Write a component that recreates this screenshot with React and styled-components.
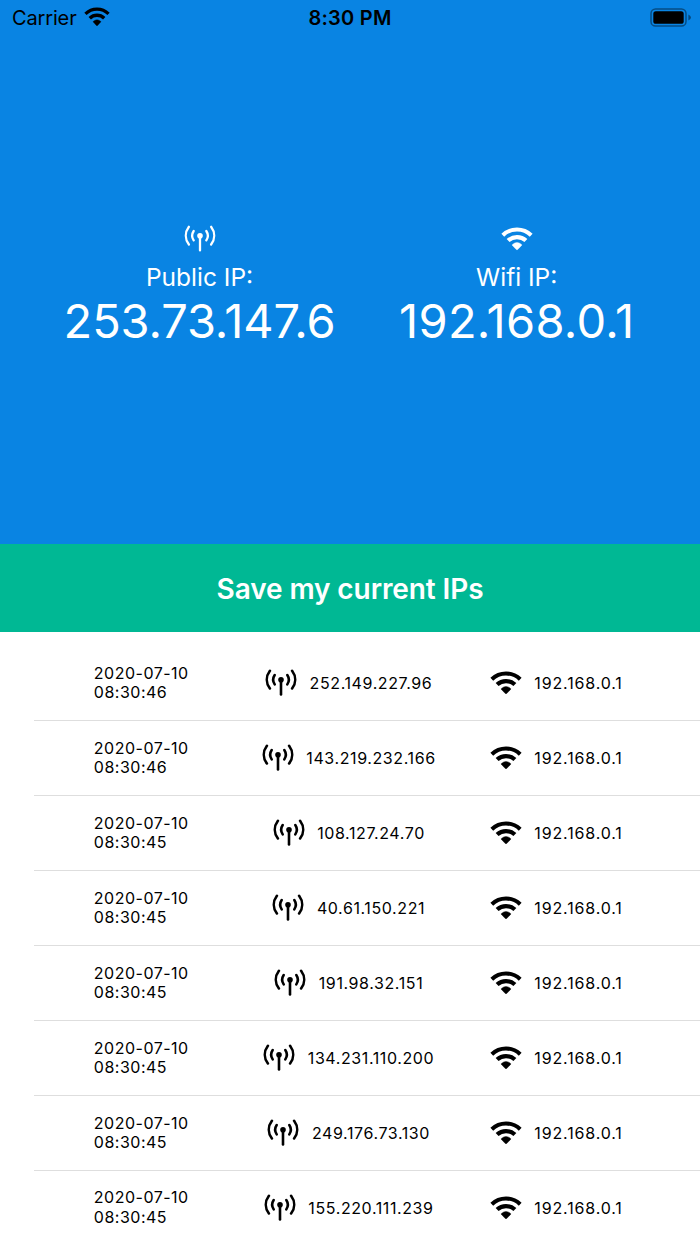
import React from 'react'
import styled, { createGlobalStyle } from 'styled-components'

const entries = [
  { date: '2020-07-10', time: '08:30:46', publicIp: '252.149.227.96' },
  { date: '2020-07-10', time: '08:30:46', publicIp: '143.219.232.166' },
  { date: '2020-07-10', time: '08:30:45', publicIp: '108.127.24.70' },
  { date: '2020-07-10', time: '08:30:45', publicIp: '40.61.150.221' },
  { date: '2020-07-10', time: '08:30:45', publicIp: '191.98.32.151' },
  { date: '2020-07-10', time: '08:30:45', publicIp: '134.231.110.200' },
  { date: '2020-07-10', time: '08:30:45', publicIp: '249.176.73.130' },
  { date: '2020-07-10', time: '08:30:45', publicIp: '155.220.111.239' }
]

const wifiIp = '192.168.0.1'

const WifiIcon = ({ width = 32, height = 23 }) => (
  <svg width={width} height={height} viewBox="0 0 32 23" fill="none">
    <g stroke="currentColor">
      <path d="M1.8 8.3A20.3 20.3 0 0 1 30.2 8.3" strokeWidth="4" />
      <path d="M7.1 13.6A12.9 12.9 0 0 1 24.9 13.6" strokeWidth="4.2" />
    </g>
    <path
      d="M11.4 18.4Q11 17.9 11.5 17.4Q16 13.6 20.5 17.4Q21 17.9 20.6 18.4L16.7 22.5Q16 23.1 15.3 22.5Z"
      fill="currentColor"
      stroke="currentColor"
      strokeWidth="0.4"
    />
  </svg>
)

const AntennaIcon = ({ weight = 2.6 }) => (
  <svg width="32" height="27" viewBox="0 0 32 27" fill="none">
    <g stroke="currentColor" strokeWidth={weight} strokeLinecap="round">
      <path d="M4.9 1.8C0.8 7.3 0.8 14 4.9 19.5" />
      <path d="M27.1 1.8C31.2 7.3 31.2 14 27.1 19.5" />
      <path d="M9.7 6C7.7 9 7.7 12.4 9.7 15.4" />
      <path d="M22.3 6C24.3 9 24.3 12.4 22.3 15.4" />
      <path d="M16 11V25.4" />
    </g>
    <circle cx="16" cy="10.8" r="2.8" fill="currentColor" />
  </svg>
)

const BatteryIcon = () => (
  <svg width="42" height="20" viewBox="0 0 42 20" fill="none">
    <rect x="1" y="1" width="35" height="17" rx="4.6" stroke="#000" strokeOpacity="0.42" strokeWidth="1.5" />
    <rect x="3.3" y="3.2" width="30.4" height="12.6" rx="2.6" fill="#000" />
    <path d="M38.4 6.5Q41 7.8 41 9.5T38.4 12.5Z" fill="#000" fillOpacity="0.45" />
  </svg>
)

const App = () => (
  <Screen>
    <GlobalStyle />
    <StatusBar>
      <Carrier>
        Carrier
        <WifiIcon width={26} height={19} />
      </Carrier>
      <Clock>8:30 PM</Clock>
      <Battery>
        <BatteryIcon />
      </Battery>
    </StatusBar>
    <Header>
      <CurrentIp>
        <AntennaIcon weight={2.3} />
        <Label>Public IP:</Label>
        <Address $spacing="-0.1px">253.73.147.6</Address>
      </CurrentIp>
      <CurrentIp>
        <WifiIcon />
        <Label>Wifi IP:</Label>
        <Address $spacing="0.3px">{wifiIp}</Address>
      </CurrentIp>
    </Header>
    <SaveButton>Save my current IPs</SaveButton>
    <List>
      {entries.map((entry, index) => (
        <Row key={index}>
          <Cell>
            <DateTime>
              {entry.date}
              <br />
              {entry.time}
            </DateTime>
          </Cell>
          <Cell>
            <AntennaIcon />
            <RowIp $spacing="0.6px">{entry.publicIp}</RowIp>
          </Cell>
          <Cell>
            <WifiIcon />
            <RowIp $spacing="0.85px">{wifiIp}</RowIp>
          </Cell>
        </Row>
      ))}
    </List>
  </Screen>
)

const GlobalStyle = createGlobalStyle`
  body {
    margin: 0;
    background: #fff;
  }
  * {
    box-sizing: border-box;
  }
`

const Screen = styled.div`
  display: flex;
  flex-direction: column;
  width: 700px;
  height: 1244px;
  overflow: hidden;
  font-family: Inter, 'Liberation Sans', sans-serif;
  color: #000;
`

const StatusBar = styled.div`
  display: grid;
  grid-template-columns: 1fr auto 1fr;
  align-items: center;
  flex: none;
  height: 36px;
  padding: 0 8px 0 12px;
  background: #0984e3;
  font-size: 20px;
`

const Carrier = styled.div`
  display: flex;
  align-items: center;
  gap: 7px;
  letter-spacing: -0.15px;

  svg {
    margin-top: -3px;
  }
`

const Clock = styled.div`
  margin-right: 4px;
  font-weight: 600;
  letter-spacing: 0.25px;
`

const Battery = styled.div`
  display: flex;
  justify-content: flex-end;
`

const Header = styled.div`
  display: flex;
  justify-content: space-evenly;
  flex: none;
  height: 508px;
  padding: 189px 2px 0 0;
  background: #0984e3;
  color: #fff;
`

const CurrentIp = styled.div`
  display: flex;
  flex-direction: column;
  align-items: center;

  svg {
    flex: none;
    height: 27px;
  }
`

const Label = styled.div`
  margin-top: 9px;
  font-size: 24.5px;
  line-height: 32px;
`

const Address = styled.div`
  font-size: 47px;
  line-height: 56px;
  letter-spacing: ${props => props.$spacing};
`

const SaveButton = styled.button`
  flex: none;
  height: 88px;
  padding: 2px 0 0;
  border: none;
  background: #00b894;
  color: #fff;
  font-family: inherit;
  font-size: 28px;
  font-weight: 600;
  letter-spacing: -0.1px;
`

const List = styled.div`
  padding: 14px 0 0 34px;
`

const Row = styled.div`
  display: grid;
  grid-template-columns: repeat(3, 207.5px);
  height: 74.95px;
  padding-left: 3.5px;
  border-bottom: 1px solid #dedede;
`

const Cell = styled.div`
  display: flex;
  align-items: center;
  justify-content: center;
  gap: 12.5px;
`

const DateTime = styled.div`
  margin-top: 1px;
  font-size: 16px;
  line-height: 19.6px;
  letter-spacing: 0.5px;
`

const RowIp = styled.div`
  font-size: 16px;
  letter-spacing: ${props => props.$spacing};
`

export default App
